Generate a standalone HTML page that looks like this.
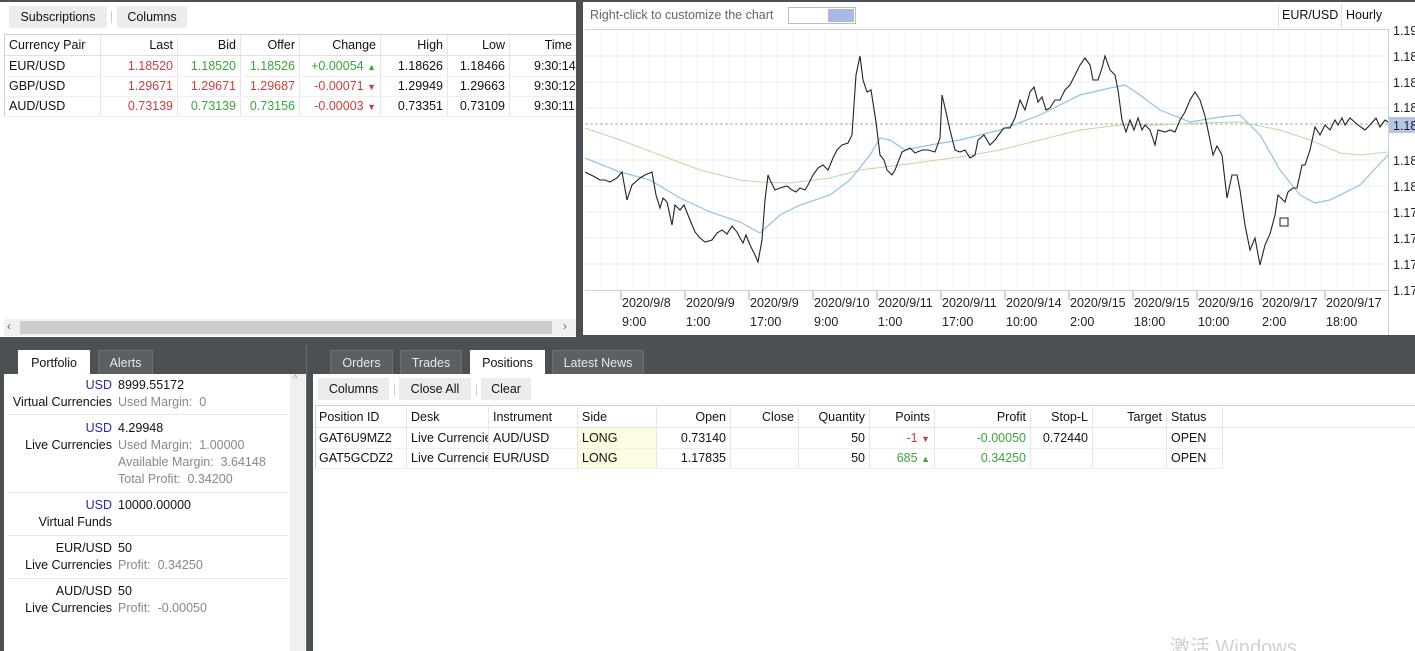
<!DOCTYPE html>
<html><head><meta charset="utf-8">
<style>
*{margin:0;padding:0;box-sizing:border-box}
html,body{width:1415px;height:651px;overflow:hidden}
body{background:#4b5055;font-family:"Liberation Sans","Noto Sans CJK SC",sans-serif;font-size:12.5px;color:#111;position:relative}
.a{position:absolute}
.p{position:absolute;background:#fff}
.btn{position:absolute;background:#ececec;height:22px;line-height:22px;text-align:center;font-size:12.5px}
.c{position:absolute;height:20px;line-height:20px;white-space:nowrap;overflow:hidden;border-right:1px solid #e6e6e6;padding:0 4px}
.r{text-align:right}
.red{color:#d23c3c}.grn{color:#3aa53a}
.tab{position:absolute;height:24px;line-height:24px;text-align:center;background:#5b6065;color:#e8e8e8;border:1px solid #6b7075;border-bottom:none;font-size:12.5px}
.tab.on{background:#fff;color:#111;border-color:#fff}
.pl{position:absolute;width:108px;text-align:right;height:17px;line-height:17px}
.pv{position:absolute;left:118px;height:17px;line-height:17px;white-space:nowrap}
.gr{color:#888}
.sep{position:absolute;left:8px;width:280px;height:1px;background:#e8e8e8}
</style></head><body>

<div class="p" style="left:0;top:2px;width:576px;height:335px"></div>
<div class="btn" style="left:9px;top:6px;width:98px">Subscriptions</div>
<div class="a" style="left:111px;top:11px;width:1px;height:12px;background:#ccc"></div>
<div class="btn" style="left:117px;top:6px;width:70px">Columns</div>
<div class="a" style="left:4px;top:34px;width:572px;height:1px;background:#d0d0d0"></div>
<div class="a" style="left:4px;top:55px;width:572px;height:1px;background:#e0e0e0"></div>
<div class="a" style="left:4px;top:34px;width:1px;height:82px;background:#d0d0d0"></div>
<div class="a" style="top:35px;left:0">
<div class="c" style="left:5px;top:0;width:96px">Currency Pair</div>
<div class="c r" style="left:101px;top:0;width:77px">Last</div>
<div class="c r" style="left:178px;top:0;width:63px">Bid</div>
<div class="c r" style="left:241px;top:0;width:59px">Offer</div>
<div class="c r" style="left:300px;top:0;width:81px">Change</div>
<div class="c r" style="left:381px;top:0;width:67px">High</div>
<div class="c r" style="left:448px;top:0;width:62px">Low</div>
<div class="c r" style="left:510px;top:0;width:66px;border:none">Time</div>
</div>
<div class="a" style="top:56px;left:0">
<div class="c" style="left:5px;top:0;width:96px">EUR/USD</div>
<div class="c r red" style="left:101px;top:0;width:77px">1.18520</div>
<div class="c r grn" style="left:178px;top:0;width:63px">1.18520</div>
<div class="c r grn" style="left:241px;top:0;width:59px">1.18526</div>
<div class="c r grn" style="left:300px;top:0;width:81px">+0.00054 <span style="font-size:9px">▲</span></div>
<div class="c r" style="left:381px;top:0;width:67px">1.18626</div>
<div class="c r" style="left:448px;top:0;width:62px">1.18466</div>
<div class="c r" style="left:510px;top:0;width:66px;border:none;text-align:left;padding-left:24px">9:30:14</div>
<div class="c" style="left:5px;top:20px;width:96px">GBP/USD</div>
<div class="c r red" style="left:101px;top:20px;width:77px">1.29671</div>
<div class="c r red" style="left:178px;top:20px;width:63px">1.29671</div>
<div class="c r red" style="left:241px;top:20px;width:59px">1.29687</div>
<div class="c r red" style="left:300px;top:20px;width:81px">-0.00071 <span style="font-size:9px">▼</span></div>
<div class="c r" style="left:381px;top:20px;width:67px">1.29949</div>
<div class="c r" style="left:448px;top:20px;width:62px">1.29663</div>
<div class="c r" style="left:510px;top:20px;width:66px;border:none;text-align:left;padding-left:24px">9:30:12</div>
<div class="c" style="left:5px;top:40px;width:96px">AUD/USD</div>
<div class="c r red" style="left:101px;top:40px;width:77px">0.73139</div>
<div class="c r grn" style="left:178px;top:40px;width:63px">0.73139</div>
<div class="c r grn" style="left:241px;top:40px;width:59px">0.73156</div>
<div class="c r red" style="left:300px;top:40px;width:81px">-0.00003 <span style="font-size:9px">▼</span></div>
<div class="c r" style="left:381px;top:40px;width:67px">0.73351</div>
<div class="c r" style="left:448px;top:40px;width:62px">0.73109</div>
<div class="c r" style="left:510px;top:40px;width:66px;border:none;text-align:left;padding-left:24px">9:30:11</div>
</div>
<div class="a" style="left:4px;top:76px;width:572px;height:1px;background:#efefef"></div>
<div class="a" style="left:4px;top:96px;width:572px;height:1px;background:#efefef"></div>
<div class="a" style="left:4px;top:116px;width:572px;height:1px;background:#efefef"></div>
<div class="a" style="left:4px;top:319px;width:572px;height:17px;background:#f0f0f0"></div>
<div class="a" style="left:20px;top:321px;width:532px;height:13px;background:#cdcdcd"></div>
<div class="a" style="left:7px;top:319px;font-size:12px;color:#666">‹</div>
<div class="a" style="left:563px;top:319px;font-size:12px;color:#666">›</div>

<div class="p" style="left:583px;top:2px;width:832px;height:333px"></div>
<div class="a" style="left:590px;top:8px;color:#666;font-size:12.5px">Right-click to customize the chart</div>
<div class="a" style="left:788px;top:7px;width:68px;height:17px;border:1px solid #bbb;background:#fff"></div>
<div class="a" style="left:828px;top:9px;width:26px;height:13px;background:#aab8e6"></div>
<div class="a" style="left:1278px;top:4px;width:1px;height:24px;background:#ddd"></div>
<div class="a" style="left:1341px;top:4px;width:1px;height:24px;background:#ddd"></div>
<div class="a" style="left:1282px;top:8px">EUR/USD</div>
<div class="a" style="left:1346px;top:8px">Hourly</div>
<svg class="a" style="left:0;top:0" width="1415" height="340">
<g stroke="#f4f6f8" stroke-width="1">
<path d="M601 29V291M617 29V291M633 29V291M649 29V291M665 29V291M681 29V291M697 29V291M713 29V291M729 29V291M745 29V291M761 29V291M777 29V291M793 29V291M809 29V291M825 29V291M841 29V291M857 29V291M873 29V291M889 29V291M905 29V291M921 29V291M937 29V291M953 29V291M969 29V291M985 29V291M1001 29V291M1017 29V291M1033 29V291M1049 29V291M1065 29V291M1081 29V291M1097 29V291M1113 29V291M1129 29V291M1145 29V291M1161 29V291M1177 29V291M1193 29V291M1209 29V291M1225 29V291M1241 29V291M1257 29V291M1273 29V291M1289 29V291M1305 29V291M1321 29V291M1337 29V291M1353 29V291M1369 29V291"/>
</g>
<g stroke="#e9edf0"><path d="M585 56H1388M585 82H1388M585 108H1388M585 160H1388M585 186H1388M585 212H1388M585 238H1388M585 264H1388"/></g>
<path d="M585 29.5H1388M585 290.5H1388M1388.5 29V335" stroke="#c8d0d8"/>
<path d="M585 124H1388" stroke="#aaa" stroke-dasharray="3,2"/>
<g stroke="#aaa"><path d="M621 291V300M685 291V300M749 291V300M813 291V300M877 291V300M941 291V300M1005 291V300M1069 291V300M1133 291V300M1197 291V300M1261 291V300M1325 291V300"/></g>
<polyline fill="none" stroke="#b9dca0" stroke-width="1" points="585,128 620,140 660,155 700,170 740,180 760,182 790,183 830,178 860,170 900,165 960,157 1000,150 1040,140 1080,130 1120,125 1160,125 1200,123 1240,122 1280,130 1310,140 1340,153 1360,155 1388,152"/>
<polyline fill="none" stroke="#8cc4e4" stroke-width="1.2" points="585,158 620,172 650,180 680,198 710,212 740,222 760,233 780,215 800,205 830,195 850,180 870,155 880,138 890,140 905,150 930,145 960,140 1000,130 1040,115 1080,95 1110,88 1125,85 1140,95 1160,110 1190,122 1220,117 1240,115 1260,135 1280,170 1300,195 1315,203 1330,200 1360,185 1388,155"/>
<polyline fill="none" stroke="#222" stroke-width="1.1" points="585,172 595,177 600,180 605,180 610,182 617,178 622,172 627,200 632,185 640,178 645,175 652,172 656,195 660,208 663,198 667,202 672,225 675,205 680,210 684,205 690,220 695,232 700,238 705,242 712,240 717,233 722,230 727,234 732,226 737,232 740,238 743,243 746,235 750,245 755,255 758,262 762,240 765,200 768,175 770,180 775,190 780,188 787,186 792,190 796,192 800,188 805,190 808,185 813,175 818,168 823,165 828,170 833,158 837,150 842,145 848,143 852,135 856,75 860,56 863,80 867,92 871,90 876,122 880,155 884,160 887,170 892,175 895,170 902,152 906,150 910,148 915,153 922,150 928,150 935,152 940,138 942,95 946,112 950,130 955,150 960,152 965,150 970,158 975,155 978,140 984,135 990,145 995,140 1000,133 1004,128 1010,128 1015,118 1020,100 1025,110 1030,92 1034,87 1038,102 1042,97 1046,110 1050,108 1055,100 1060,100 1065,90 1070,85 1075,75 1080,65 1085,58 1090,65 1093,80 1098,80 1102,68 1105,56 1110,70 1115,75 1118,90 1122,120 1126,132 1130,120 1134,130 1138,118 1142,130 1145,125 1150,130 1155,145 1158,130 1165,132 1170,130 1175,132 1180,120 1185,112 1190,100 1195,92 1200,100 1205,116 1210,140 1213,155 1217,146 1222,155 1227,198 1232,175 1237,175 1240,190 1245,225 1250,250 1255,238 1260,265 1265,245 1270,234 1275,215 1278,195 1285,202 1288,192 1293,188 1297,188 1302,165 1305,165 1310,150 1315,127 1320,135 1325,125 1330,130 1335,120 1338,125 1342,118 1345,125 1350,118 1358,125 1365,130 1370,125 1376,118 1380,127 1385,120 1388,122"/>
<rect x="1280" y="218" width="8" height="8" fill="#fff" stroke="#222"/>
<rect x="1389" y="117" width="26" height="16" fill="#b6c6e6"/>
<g font-family="Liberation Sans" font-size="12.5" fill="#222">
<text x="1393" y="35">1.19</text><text x="1393" y="61">1.18</text><text x="1393" y="87">1.18</text><text x="1393" y="112">1.18</text><text x="1393" y="130">1.18</text><text x="1393" y="165">1.18</text><text x="1393" y="191">1.18</text><text x="1393" y="217">1.17</text><text x="1393" y="243">1.17</text><text x="1393" y="269">1.17</text><text x="1393" y="295">1.17</text>
<text x="622" y="307">2020/9/8</text><text x="622" y="326">9:00</text>
<text x="686" y="307">2020/9/9</text><text x="686" y="326">1:00</text>
<text x="750" y="307">2020/9/9</text><text x="750" y="326">17:00</text>
<text x="814" y="307">2020/9/10</text><text x="814" y="326">9:00</text>
<text x="878" y="307">2020/9/11</text><text x="878" y="326">1:00</text>
<text x="942" y="307">2020/9/11</text><text x="942" y="326">17:00</text>
<text x="1006" y="307">2020/9/14</text><text x="1006" y="326">10:00</text>
<text x="1070" y="307">2020/9/15</text><text x="1070" y="326">2:00</text>
<text x="1134" y="307">2020/9/15</text><text x="1134" y="326">18:00</text>
<text x="1198" y="307">2020/9/16</text><text x="1198" y="326">10:00</text>
<text x="1262" y="307">2020/9/17</text><text x="1262" y="326">2:00</text>
<text x="1326" y="307">2020/9/17</text><text x="1326" y="326">18:00</text>
</g>
</svg>

<div class="tab on" style="left:18px;top:350px;width:72px">Portfolio</div>
<div class="tab" style="left:98px;top:350px;width:55px">Alerts</div>
<div class="a" style="left:306px;top:345px;width:1px;height:306px;background:#666b70"></div>
<div class="tab" style="left:330px;top:350px;width:63px">Orders</div>
<div class="tab" style="left:400px;top:350px;width:62px">Trades</div>
<div class="tab on" style="left:470px;top:350px;width:75px">Positions</div>
<div class="tab" style="left:552px;top:350px;width:92px">Latest News</div>

<div class="p" style="left:4px;top:374px;width:302px;height:277px"></div>
<div class="a" style="left:290px;top:374px;width:15px;height:277px;background:#f0f0f0"></div>
<div class="a" style="left:293px;top:374px;font-size:10px;color:#aaa">^</div>
<div class="pl" style="left:4px;top:377px;color:#2a2a9a">USD</div><div class="pv" style="top:377px">8999.55172</div>
<div class="pl" style="left:4px;top:394px">Virtual Currencies</div><div class="pv gr" style="top:394px">Used Margin:&nbsp; 0</div>
<div class="sep" style="top:414px"></div>
<div class="pl" style="left:4px;top:420px;color:#2a2a9a">USD</div><div class="pv" style="top:420px">4.29948</div>
<div class="pl" style="left:4px;top:437px">Live Currencies</div><div class="pv gr" style="top:437px">Used Margin:&nbsp; 1.00000</div>
<div class="pv gr" style="top:454px">Available Margin:&nbsp; 3.64148</div>
<div class="pv gr" style="top:471px">Total Profit:&nbsp; 0.34200</div>
<div class="sep" style="top:492px"></div>
<div class="pl" style="left:4px;top:497px;color:#2a2a9a">USD</div><div class="pv" style="top:497px">10000.00000</div>
<div class="pl" style="left:4px;top:514px">Virtual Funds</div>
<div class="sep" style="top:535px"></div>
<div class="pl" style="left:4px;top:540px">EUR/USD</div><div class="pv" style="top:540px">50</div>
<div class="pl" style="left:4px;top:557px">Live Currencies</div><div class="pv gr" style="top:557px">Profit:&nbsp; 0.34250</div>
<div class="sep" style="top:578px"></div>
<div class="pl" style="left:4px;top:583px">AUD/USD</div><div class="pv" style="top:583px">50</div>
<div class="pl" style="left:4px;top:600px">Live Currencies</div><div class="pv gr" style="top:600px">Profit:&nbsp; -0.00050</div>

<div class="p" style="left:313px;top:374px;width:1102px;height:277px"></div>
<div class="btn" style="left:318px;top:378px;width:71px">Columns</div>
<div class="a" style="left:394px;top:384px;width:1px;height:12px;background:#ccc"></div>
<div class="btn" style="left:399px;top:378px;width:72px">Close All</div>
<div class="a" style="left:476px;top:384px;width:1px;height:12px;background:#ccc"></div>
<div class="btn" style="left:481px;top:378px;width:50px">Clear</div>
<div class="a" style="left:315px;top:405px;width:1100px;height:1px;background:#cfcfcf"></div>
<div class="a" style="left:315px;top:427px;width:1100px;height:1px;background:#e2e2e2"></div>
<div class="a" style="left:315px;top:405px;width:1px;height:63px;background:#cfcfcf"></div>
<div class="a" style="top:407px;left:0">
<div class="c" style="left:315px;width:92px">Position ID</div>
<div class="c" style="left:407px;width:82px">Desk</div>
<div class="c" style="left:489px;width:89px">Instrument</div>
<div class="c" style="left:578px;width:79px">Side</div>
<div class="c r" style="left:657px;width:74px">Open</div>
<div class="c r" style="left:731px;width:68px">Close</div>
<div class="c r" style="left:799px;width:71px">Quantity</div>
<div class="c r" style="left:870px;width:65px">Points</div>
<div class="c r" style="left:935px;width:96px">Profit</div>
<div class="c r" style="left:1031px;width:62px">Stop-L</div>
<div class="c r" style="left:1093px;width:74px">Target</div>
<div class="c" style="left:1167px;width:56px">Status</div>
</div>
<div class="a" style="top:428px;left:0">
<div class="c" style="left:315px;width:92px">GAT6U9MZ2</div>
<div class="c" style="left:407px;width:82px;padding-right:0">Live Currencies</div>
<div class="c" style="left:489px;width:89px">AUD/USD</div>
<div class="c" style="left:578px;width:79px;background:#fdfbe1">LONG</div>
<div class="c r" style="left:657px;width:74px">0.73140</div>
<div class="c r" style="left:731px;width:68px"></div>
<div class="c r" style="left:799px;width:71px">50</div>
<div class="c r red" style="left:870px;width:65px">-1 <span style="font-size:9px">▼</span></div>
<div class="c r grn" style="left:935px;width:96px">-0.00050</div>
<div class="c r" style="left:1031px;width:62px">0.72440</div>
<div class="c r" style="left:1093px;width:74px"></div>
<div class="c" style="left:1167px;width:56px">OPEN</div>
<div class="c" style="left:315px;top:20px;width:92px">GAT5GCDZ2</div>
<div class="c" style="left:407px;top:20px;width:82px;padding-right:0">Live Currencies</div>
<div class="c" style="left:489px;top:20px;width:89px">EUR/USD</div>
<div class="c" style="left:578px;top:20px;width:79px;background:#fdfbe1">LONG</div>
<div class="c r" style="left:657px;top:20px;width:74px">1.17835</div>
<div class="c r" style="left:731px;top:20px;width:68px"></div>
<div class="c r" style="left:799px;top:20px;width:71px">50</div>
<div class="c r grn" style="left:870px;top:20px;width:65px">685 <span style="font-size:9px">▲</span></div>
<div class="c r grn" style="left:935px;top:20px;width:96px">0.34250</div>
<div class="c r" style="left:1031px;top:20px;width:62px"></div>
<div class="c r" style="left:1093px;top:20px;width:74px"></div>
<div class="c" style="left:1167px;top:20px;width:56px">OPEN</div>
</div>
<div class="a" style="left:315px;top:448px;width:908px;height:1px;background:#efefef"></div>
<div class="a" style="left:315px;top:468px;width:908px;height:1px;background:#efefef"></div>
<div class="a" style="left:1170px;top:636px;font-size:20px;line-height:24px;color:#d0d0d0">激活 Windows</div>
</body></html>
